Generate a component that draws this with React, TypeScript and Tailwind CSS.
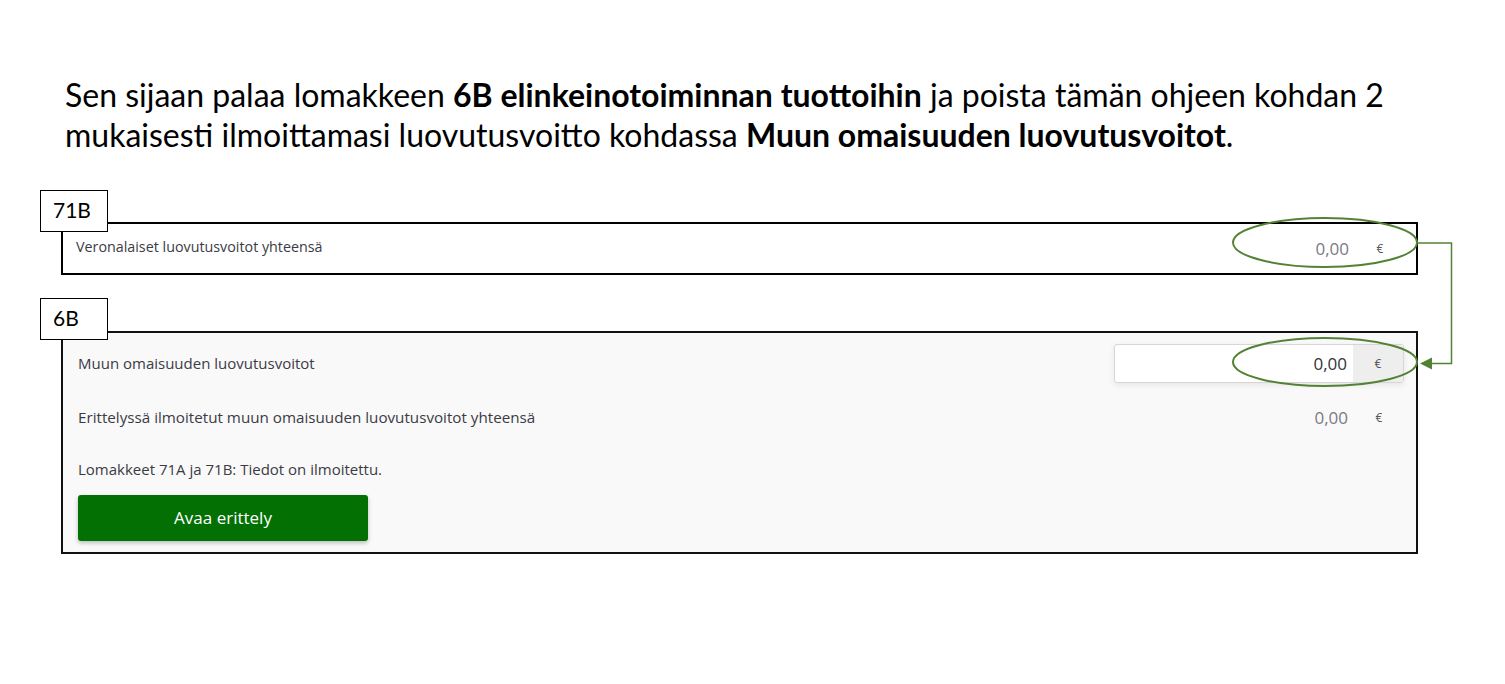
import React from 'react';

const calibri = { fontFamily: 'Lato, "Noto Sans", sans-serif' };
const segoe = { fontFamily: '"Open Sans", "Noto Sans", sans-serif' };

function FormLabel({ text }: { text: string }) {
  return (
    <div
      className="absolute left-0 top-0 z-10 h-[42px] w-[68px] border border-black bg-white pl-[12px] pt-[6px] text-[21px] leading-[26px] text-black"
      style={calibri}
    >
      {text}
    </div>
  );
}

function Amount({ value, tone, boxed }: { value: string; tone: string; boxed?: boolean }) {
  return (
    <div
      className={`flex h-[39px] w-[290px] items-stretch rounded-[3px] ${
        boxed ? 'border border-[#d6d6d6] bg-white shadow-[0_2px_6px_rgba(0,0,0,0.08)]' : ''
      }`}
    >
      <div className={`flex flex-1 items-center justify-end pr-[6px] text-[17px] ${tone}`}>{value}</div>
      <div className={`flex w-[50px] items-center justify-center text-[12px] text-[#555] ${boxed ? 'bg-[#eeeeee]' : ''}`}>
        €
      </div>
    </div>
  );
}

export default function App() {
  return (
    <div className="relative h-[684px] w-[1505px] overflow-hidden bg-white">
      <p className="pl-[65px] pt-[75px] text-[32px] leading-[40px] text-black" style={calibri}>
        Sen sijaan palaa lomakkeen <b>6B elinkeinotoiminnan tuottoihin</b> ja poista tämän ohjeen kohdan 2
        <br />
        mukaisesti ilmoittamasi luovutusvoitto kohdassa <b>Muun omaisuuden luovutusvoitot</b>.
      </p>

      <div className="ml-[40px] mt-[35px] w-[1378px]" style={segoe}>
        {/* 71B */}
        <div className="relative pt-[32px]">
          <FormLabel text="71B" />
          <div className="ml-[21px] flex h-[53px] items-start justify-between border-2 border-black bg-white pl-[13px] pr-[11px]">
            <span className="pt-[12px] text-[14.3px] text-[#3b3b45]">Veronalaiset luovutusvoitot yhteensä</span>
            <div className="pt-[5px]">
              <Amount value="0,00" tone="text-[#7a7a85]" />
            </div>
          </div>
        </div>

        {/* 6B */}
        <div className="relative mt-[23px] pt-[33px]">
          <FormLabel text="6B" />
          <div className="ml-[21px] h-[223px] border-2 border-[#111] bg-[#f9f9f9] pl-[15px] pr-[12px] pt-[11px]">
            <div className="flex items-center justify-between">
              <span className="text-[15px] text-[#3b3b45]">Muun omaisuuden luovutusvoitot</span>
              <Amount value="0,00" tone="text-[#333]" boxed />
            </div>
            <div className="mt-[15px] flex items-center justify-between">
              <span className="text-[15.2px] text-[#3b3b45]">Erittelyssä ilmoitetut muun omaisuuden luovutusvoitot yhteensä</span>
              <Amount value="0,00" tone="text-[#7a7a85]" />
            </div>
            <p className="mt-[22px] text-[15px] leading-[20px] text-[#3b3b45]">Lomakkeet 71A ja 71B: Tiedot on ilmoitettu.</p>
            <button className="mt-[16px] h-[46px] w-[290px] rounded-[3px] bg-[#037003] text-[17px] text-white shadow-[0_2px_4px_rgba(0,0,0,0.25)]">
              Avaa erittely
            </button>
          </div>
        </div>
      </div>

      {/* annotation: ellipses and connector */}
      <svg className="pointer-events-none absolute left-0 top-0" width="1505" height="684">
        <ellipse cx="1325" cy="242.5" rx="92" ry="24.5" fill="none" stroke="#548235" strokeWidth="2" />
        <ellipse cx="1325" cy="362" rx="92" ry="24" fill="none" stroke="#548235" strokeWidth="2" />
        <polyline points="1417,243 1451.5,243 1451.5,363.5 1430,363.5" fill="none" stroke="#548235" strokeWidth="1.5" />
        <polygon points="1420,363.5 1432,357.5 1432,369.5" fill="#548235" />
      </svg>
    </div>
  );
}
